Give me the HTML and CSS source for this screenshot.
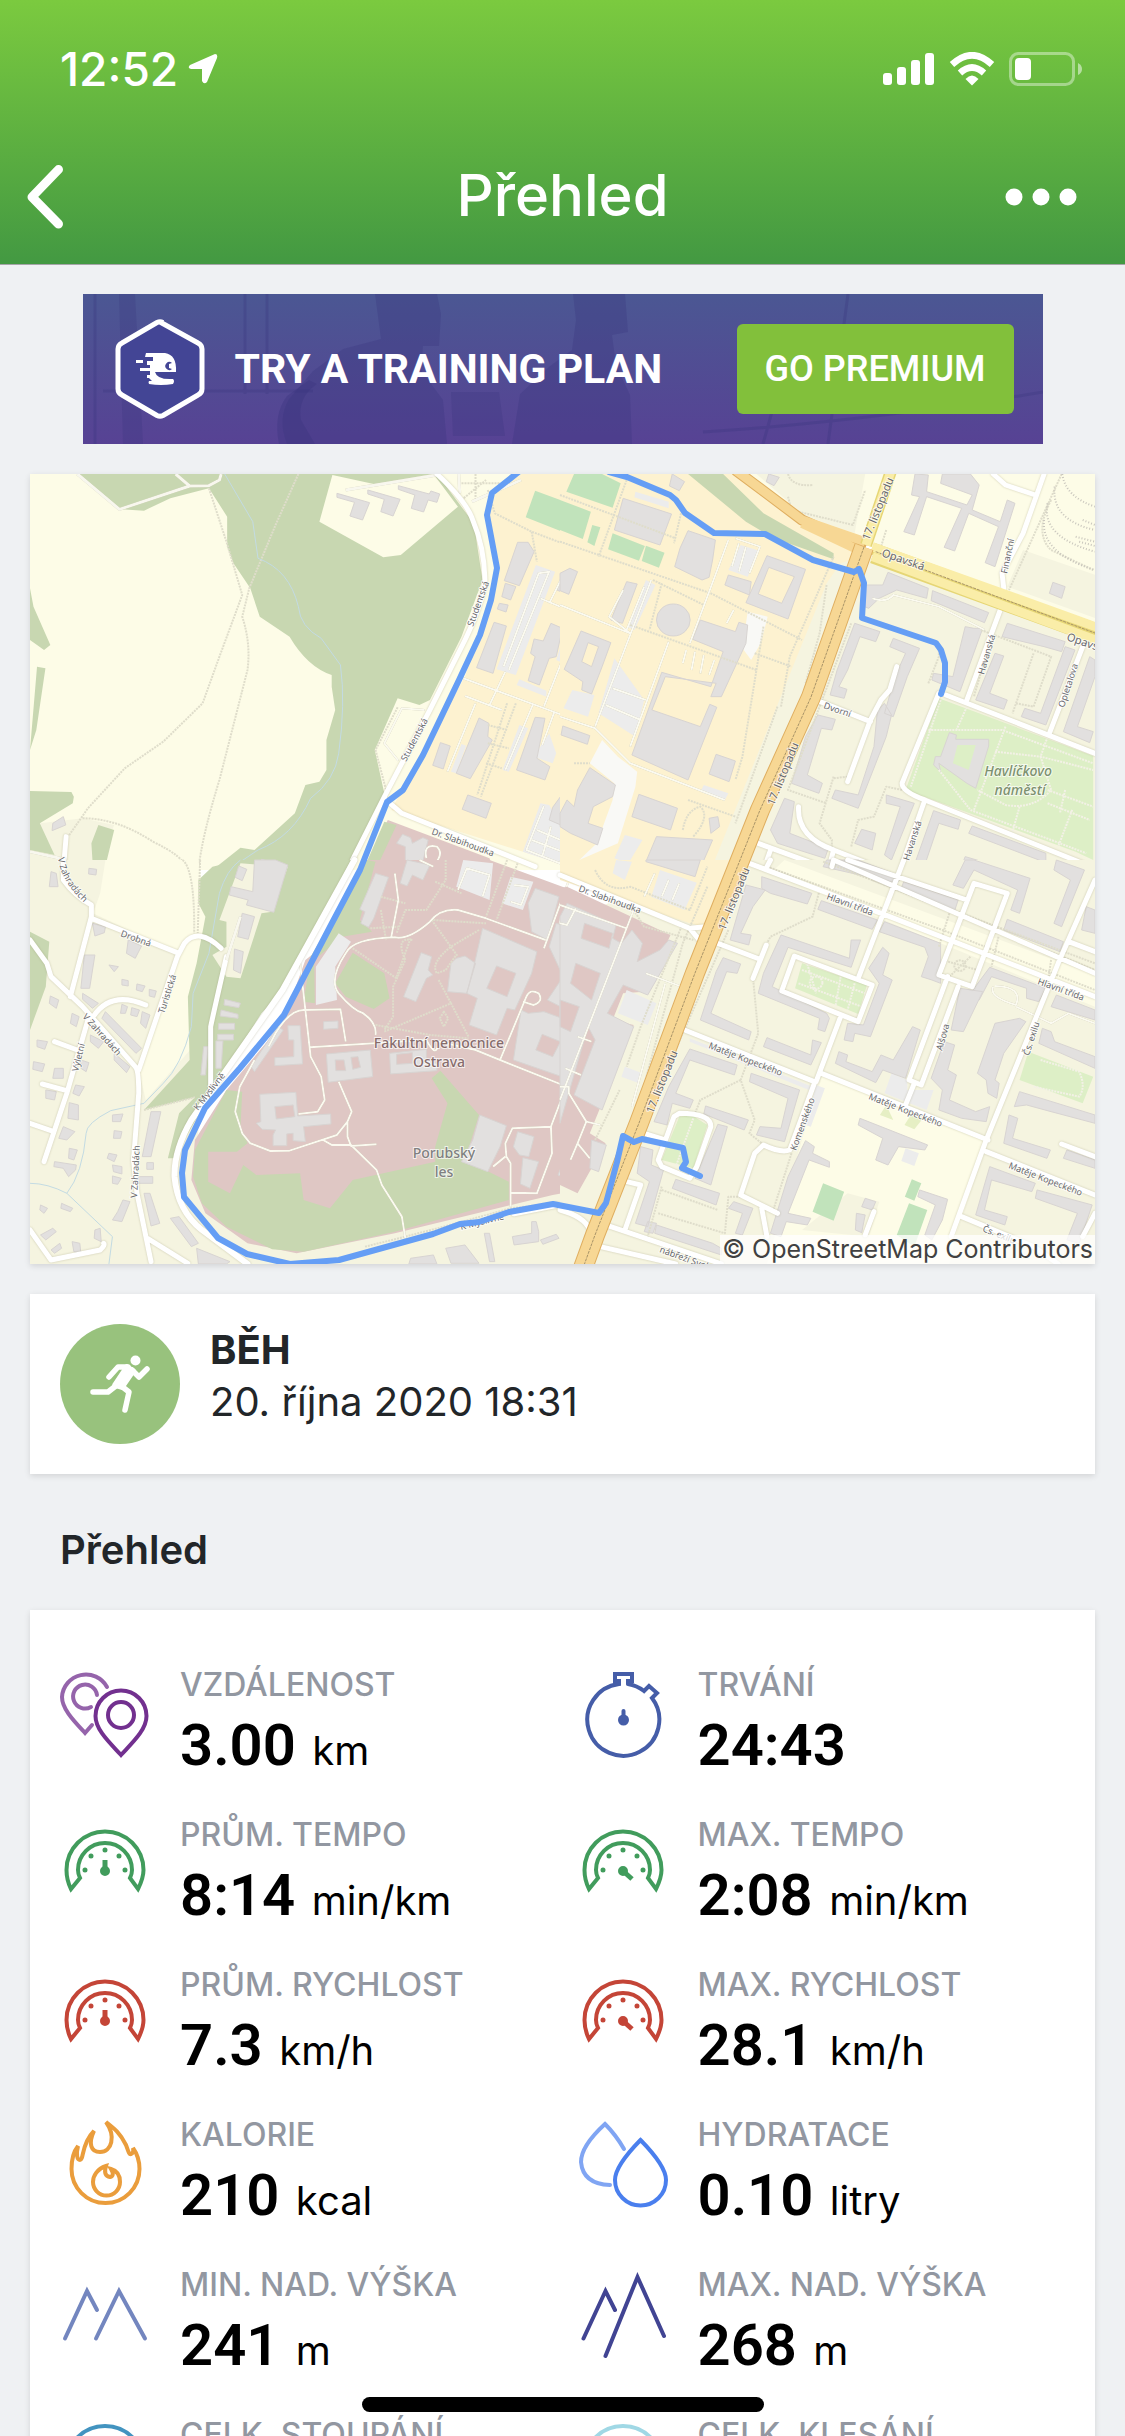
FILE: index.html
```html
<!DOCTYPE html>
<html lang="cs">
<head>
	<meta charset="UTF-8">
	<meta name="viewport" content="width=device-width, initial-scale=1.0">
	<title>Přehled</title>
	<link rel="stylesheet" href="styles.css">
</head>
<body>
	<div class="screen">
		<header class="header">
			<div class="status-bar">
				<div class="status-left">
					<span class="time">12:52</span>
					<svg class="location" viewBox="0 0 30 30"><path d="M27 0 L2 11 Q-1 14 3 15 L14 15 L14 27 Q16 31 19 28 L29 4 Q30 0 27 0z" fill="#fff"/></svg>
				</div>
				<div class="status-right">
					<svg width="52" height="34" viewBox="0 0 52 34" fill="#fff">
						<rect x="0" y="21" width="9" height="12" rx="3"/>
						<rect x="14" y="15" width="9" height="18" rx="3"/>
						<rect x="28" y="8" width="9" height="25" rx="3"/>
						<rect x="42" y="1" width="9" height="32" rx="3"/>
					</svg>
					<svg width="46" height="34" viewBox="0 0 46 34" fill="none" stroke="#fff" stroke-width="6.5">
						<path d="M3 12.5 Q23 -6 43 12.5"/>
						<path d="M11 21 Q23 10 35 21"/>
						<path d="M16.500 27 Q23 20 29.500 27 L23 33.500z" fill="#fff" stroke="none"/>
					</svg>
					<svg width="74" height="34" viewBox="0 0 74 34">
						<rect x="1.500" y="1.500" width="63" height="31" rx="8" fill="none" stroke="#fff" stroke-width="3" opacity=".4"/>
						<rect x="6" y="6" width="16" height="22" rx="4" fill="#fff"/>
						<path d="M69 11 q4 2 4 6 t-4 6z" fill="#fff" opacity=".5"/>
					</svg>
				</div>
			</div>
			<div class="nav">
				<button class="nav-btn" aria-label="Zpět">
					<svg width="36" height="64" viewBox="0 0 36 64"><path d="M31.500 4.500 L5 32 L31.500 59" fill="none" stroke="#fff" stroke-width="9" stroke-linecap="round" stroke-linejoin="round"/></svg>
				</button>
				<h1>Přehled</h1>
				<button class="nav-btn nav-more" aria-label="Více">
					<svg width="72" height="18" viewBox="0 0 72 18" fill="#fff"><circle cx="9" cy="9" r="8.500"/><circle cx="36" cy="9" r="8.500"/><circle cx="63" cy="9" r="8.500"/></svg>
				</button>
			</div>
		</header>

		<main>
			<section class="banner">
				<svg class="banner-bg" viewBox="0 0 960 150" preserveAspectRatio="none" fill="#38357d">
					<path d="M292 0 h62 l4 20 -2 32 h-16 l-2 24 22 30 4 44 h-160 q-10 -25 2 -45 l24 -28 30 -22 38 -10z" opacity=".3"/>
					<path d="M196 150 q-6 -30 8 -48 l22 -16 8 4 q-20 14 -16 36 l14 24z" opacity=".35"/>
					<path d="M490 0 h52 l3 38 -16 3 4 30 14 30 2 49 h-120 l8 -50 30 -28 22 -16 4 -30z" opacity=".3"/>
					<path d="M368 98 h48 l6 44 h-52z M36 0 h16 l8 150 h-20z" opacity=".25"/>
					<path d="M12 0 v150 M162 0 v100 M184 0 v100 M20 97 h210 M765 0 L745 150 M705 60 L680 150 M620 138 Q780 128 960 98" fill="none" stroke="#38357d" stroke-width="3" opacity=".3"/>
				</svg>
				<svg class="banner-logo" viewBox="0 0 90 100">
					<path d="M45 3 L83 24 Q87 26 87 30 V70 Q87 74 83 76 L48 96.500 Q45 98 42 96.500 L7 76 Q3 74 3 70 V30 Q3 26 7 24 L42 3.500 Q45 2 48 3.500" fill="#434595" stroke="#fff" stroke-width="5"/>
					<path d="M31 34 H50 Q62 36 61 53 H40 Q42 61 58 60 Q60 62 58 65 Q46 67 34 65 Q33 63 34 62 H37 L34 59 H32 V56 H35 V52 H25 V49 H35 V46 H32 V42 H38 V38 H30z M21 41 h7 v3 h-7z" fill="#fff"/>
					<path d="M57 44 a4 4 0 1 0 0 6 l-3 -1 v-4z" fill="#434595"/>
				</svg>
				<span class="banner-text">TRY A TRAINING PLAN</span>
				<button class="premium-btn">GO PREMIUM</button>
			</section>

			<section class="card map">
				<svg class="map-svg" viewBox="30 474 1065 790" preserveAspectRatio="xMidYMid slice">
					<!-- north-west -->
					<g transform="translate(30 470) scale(.3508 .3333)">
						<path class="field" d="M0 0 H1568 V1200 H0z"/>
						<path class="wood" d="M140 12 L260 118 L325 122 L400 85 L510 55 L562 140 L562 230 L580 280 L628 355 L655 440 L740 500 Q790 590 860 615 L860 650 L870 720 L845 810 L845 900 L825 935 L785 945 L755 1030 L640 1140 L600 1133 L520 1200 L915 1200 L1010 970 L983 840 L1048 685 L1110 705 L1140 690 L1230 500 L1290 330 L1265 160 L1160 12z"/>
						<path class="field" d="M862 15 L825 155 L1007 262 L1057 255 L1220 110 L1150 12 L980 42z"/>
						<path class="town" d="M0 1140 L28 1060 L150 1045 L240 1065 L212 1140 L200 1200 L0 1200z"/>
						<path class="wood" d="M0 355 L10 410 L58 525 L40 540 L0 510z M20 590 L44 595 L18 780 L0 840z M0 963 L118 966 L125 980 L122 1000 L28 1060 L70 1155 L0 1140z M195 1065 L240 1080 L218 1175 L178 1170 L175 1120z"/>
						<path class="campus" d="M1400 12 H1568 V1200 L1030 1020 L1060 960 L1240 620 L1330 300 L1300 130 L1318 70z"/>
						<path class="hospital" d="M1020 1050 L1310 1165 L1320 1200 H950z"/>
						<path class="wood" d="M1010 1055 L1045 1065 L985 1200 H950z"/>
						<path class="pitch" d="M1440 62 L1568 112 V206 L1413 142z M1540 12 H1568 V78 L1530 62z"/>
						<path class="lot" d="M1442 285 L1497 305 L1385 615 L1330 598z M1535 452 L1560 462 L1520 580 L1500 570z M1395 628 L1472 662 V680 L1387 645z M1230 822 L1243 827 L1215 910 L1200 905z M1395 765 L1420 775 L1365 905 L1347 900z M1480 790 L1500 850 L1490 880 L1435 860z M1455 1000 L1480 1005 L1535 1110 L1520 1185 L1405 1145z"/>
						<path class="bld" d="M875 70 L925 85 L968 98 L948 150 L912 138 L925 97 L875 82z M963 60 L1055 88 L1035 138 L1000 125 L1010 88 L963 72z M1050 47 L1138 72 L1143 63 L1168 72 L1160 97 L1135 90 L1122 126 L1087 115 L1097 75 L1050 58z"/>
						<path class="bld" d="M1390 217 L1420 217 L1437 245 L1395 347 L1352 332z M1355 340 L1385 350 L1370 390 L1345 380z M1338 400 L1363 405 L1357 426 L1332 417z M1323 457 L1358 468 L1320 610 L1273 593z M1485 460 L1518 475 L1500 560 L1480 565 L1452 645 L1420 632 L1440 560 L1427 550 L1437 507 L1463 513z M1537 295 L1562 305 L1535 375 L1502 360 L1510 335 L1525 335z M1540 500 L1568 485 V640 L1523 600z M1280 744 L1308 760 L1305 800 L1318 810 L1255 926 L1215 910z M1170 818 L1198 828 L1178 897 L1148 886z M1440 742 L1468 745 L1445 865 L1482 890 L1468 930 L1387 900z M1248 975 L1315 1000 L1300 1045 L1232 1018z M1515 765 L1568 785 V818 L1512 795z M1490 1012 L1540 940 L1568 950 V1090 L1480 1050z M1062 1093 L1085 1103 L1090 1120 L1120 1103 L1135 1110 L1115 1195 H1070 V1130 L1045 1120z M65 1060 L95 1040 L102 1065 L63 1082z M660 1168 L735 1190 V1200 H650z"/>
						<path class="path" d="M510 55 L560 215 L605 375 L540 560 L492 700 L380 815 L270 895 L165 1015 L110 1098 M765 12 L700 165 L625 355 L605 440 Q630 520 620 600 L540 930 Q490 1100 480 1200 M150 1045 Q250 1045 350 1115 Q440 1160 450 1200 M1305 60 L1325 130 L1430 185 L1568 240 M1430 185 L1445 275 M1360 700 L1275 975 M1385 700 L1285 980 M1305 765 L1360 780 M1305 820 L1365 835 M1300 880 L1345 895 M1270 12 V90 M1230 40 H1340 M1230 90 L1300 30 M1048 712 L985 840 L1015 960"/>
						<path class="service" d="M1235 625 L1568 755 M1270 700 L1190 905 M1240 678 L1345 720 M1355 605 L1310 705 M1350 590 L1450 310 L1480 305 L1365 600 M1455 385 L1568 435 L1465 710 M1435 700 L1355 900 M1495 725 L1460 825 M1520 315 L1480 400 M1050 872 L1010 820 L1060 715 L1125 720 M1465 1008 L1415 1140 L1510 1180 L1535 1120 L1445 1080 M1430 1110 L1530 1150 M1485 1070 L1460 1160 M1130 1165 Q1120 1120 1160 1130 Q1180 1150 1155 1180"/>
						<path class="stream" d="M555 12 L635 155 L650 265 Q740 300 765 410 Q770 470 830 505 L885 585 Q900 700 880 850 Q870 930 800 985 Q750 1100 650 1140 L565 1200"/>
						<path class="minor" d="M135 12 L255 118 L455 48 L510 47 L540 30 L545 12 M455 48 L415 12 M900 60 L1160 15 M1260 95 L1400 30 M1222 12 L1225 70 M0 1145 L85 1165"/>
						<path class="street" d="M1160 12 Q1245 95 1262 150 Q1295 230 1297 330 Q1290 400 1240 510 L1140 720 L1015 970 L905 1200 M1015 990 L1060 1030 L1440 1190 M103 1100 L95 1200"/>
					</g>

					<!-- north-east -->
					<g transform="translate(560 470) scale(.3508 .3333)">
						<path class="campus" d="M0 0 H860 L840 290 L500 1200 H0z"/>
						<path class="field" d="M510 12 H1568 V470 L860 220z"/>
						<path class="town" d="M800 280 L890 250 L1568 500 V1200 H430 L760 340z M560 12 H870 L840 190 L700 140z M1320 240 L1568 330 V460 L1275 350z"/>
						<path class="wood" d="M365 12 H465 L580 130 L780 250 V268 L610 205 L530 155z"/>
						<path class="park" d="M1080 685 L1520 858 V1170 L1470 1145 L985 960z"/>
						<path class="pitch" d="M40 12 H120 L173 40 L150 113 L18 65z M0 90 L88 125 L65 207 L0 180z M92 165 L115 172 L98 228 L78 217z M150 190 L242 228 L225 272 L137 238z M245 227 L298 248 L282 293 L233 273z"/>
						<path class="white" d="M535 425 L592 440 L572 520 L545 570 L520 535z M120 810 L165 860 L220 905 L215 950 L165 1120 L55 1170 L105 1120 L150 990 L155 940 L85 880z"/>
						<path class="lot" d="M515 225 L568 242 L535 320 L480 300z M245 330 L272 345 L212 480 L192 470z M215 65 L310 95 V115 L212 82z M35 660 L98 675 L80 740 L10 715z M155 565 L240 690 L215 800 L110 730z M185 1095 L235 1110 L195 1180 L155 1165z M410 945 L480 970 L470 990 L400 965z"/>
						<path class="bld" d="M180 85 L318 132 L285 225 L155 180z M320 12 L355 35 L340 62 L312 48z M365 182 L443 210 L435 270 L425 322 L405 330 L327 290 L342 235z M480 315 L545 335 L540 375 L470 345z"/>
						<path class="bld" fill-rule="evenodd" d="M590 257 L700 298 L650 447 L530 398z M595 292 L668 320 L632 400 L565 372z M60 483 L145 518 L120 590 L90 672 L62 660 L65 635 L12 598z M80 518 L110 530 L90 590 L62 575z"/>
						<circle class="bld" cx="323" cy="450" r="48"/>
						<path class="bld" d="M190 335 L220 342 L178 460 L145 450z M400 450 L500 485 L510 457 L535 465 L530 520 L460 680 L430 680 L445 640 L300 620 L262 720 L400 770 L427 703 L447 712 L365 930 L205 855 L290 607 L430 650 L465 545 L378 508z M445 853 L500 873 L482 935 L425 912z M225 973 L335 1015 L315 1080 L205 1040z M85 893 L158 945 L150 980 L95 1010 L80 1060 L122 1075 L107 1125 L30 1090 L0 1070 V1030 L20 990 L40 1010 L50 960z M275 1100 L435 1110 L400 1195 L245 1175z M425 1045 L450 1040 L455 1070 L430 1090z M595 12 L625 22 L610 47 L588 35z M8 768 L85 797 L78 823 L3 795z M28 295 L50 305 L25 373 L0 362 V310z"/>
						<path class="bld" d="M1012 12 L1050 15 L1045 65 L1160 105 L1175 75 L1085 40 L1090 12 H1170 L1195 45 L1175 120 L1255 155 L1275 90 L1297 100 L1240 290 L1212 278 L1250 170 L1165 130 L1125 243 L1095 232 L1145 115 L1045 80 L1010 195 L980 185 L1025 80 L1002 75z M1405 337 L1440 350 L1430 385 L1395 370z M935 307 L1050 355 L1045 385 L960 360 L910 385 L880 415 L868 410 L870 345 L920 345z M1062 362 L1222 428 L1210 458 L1058 392z M1155 470 L1180 475 L1205 475 L1140 665 L1060 630 L1065 610 L1120 620z M840 460 L912 485 L900 515 L855 500 L820 600 L795 650 L818 658 L810 685 L770 675 L790 600z M950 505 L1025 535 L990 620 L950 740 L925 730 L955 620 L985 550 L940 530z M925 700 L945 735 L930 800 L850 1015 L775 985 L785 960 L850 975 L895 830 L905 720z M735 735 L785 748 L775 780 L745 775 L705 915 L748 940 L738 970 L660 940 L700 800z"/>
						<path class="bld" d="M1275 460 L1440 515 L1430 545 L1380 530 L1260 500z M1440 530 L1468 540 L1385 765 L1315 740 L1325 715 L1370 730z M1240 550 L1265 558 L1225 670 L1275 690 L1265 718 L1185 690z M1510 560 L1525 570 V620 L1475 770 L1520 785 L1510 818 L1435 785z M1110 788 L1130 795 L1128 808 H1222 V828 L1185 955 L1160 940 L1080 880 L1085 905 L1065 885 L1070 860 H1085z M640 985 L668 995 L655 1090 L765 1135 L755 1165 L620 1120 L600 1080z M930 975 L1010 1000 L945 1170 L925 1155 L970 1010 L930 1000z M1065 1022 L1142 1050 L1135 1078 L1080 1060 L1035 1200 H1005z M1175 1068 L1385 1150 V1178 L1165 1090z M860 1078 L900 1090 L890 1140 L840 1120z M1155 1160 L1220 1180 V1200 H1140z"/>
						<path class="parkhole" d="M1133 825 H1185 L1165 900 L1120 880z"/>
						<path class="path" d="M0 75 L330 205 M0 215 L430 370 L690 510 M190 30 L110 260 M345 130 L325 220 M265 330 L410 405 M290 340 L255 480 M200 465 L560 600 M580 470 L520 860 L500 930 M555 550 L660 590 M630 710 L655 560 L780 260 M620 710 L500 1060 M650 80 L660 120 L835 165 L870 60 M650 12 Q660 50 720 45 M930 180 L900 280 M1430 12 L1280 360 M1400 90 Q1350 190 1400 240 L1520 300 M760 345 L740 490 L700 640 M830 460 L650 960 L760 1000 M780 920 L740 1060 L775 1110 V1140 M820 920 L780 925 M975 960 L930 950 L895 1040 L850 1050 L830 1130 M1050 640 L1080 560 V530 M1200 480 L1400 560 L1350 710 L1300 700 M1350 550 L1290 730 M1230 500 L1180 680 M40 880 H85 M350 1080 Q360 1020 400 1010 Q430 1040 380 1100 M365 990 L500 1040"/>
						<path class="parkpath" d="M1050 780 H1260 L1520 880 M1085 690 L1000 950 M1160 710 L1130 780 M1080 900 L1170 1020 L1400 1110 L1500 1150 M1270 770 L1180 1020 M1240 845 L1370 860 L1520 900 M1390 800 L1370 860 L1400 960 Q1350 1020 1270 1005 L1190 960 M1440 960 L1425 1030 M1310 1010 L1290 1085 M1460 1020 L1420 1130 M1390 960 L1520 1010 M1390 1000 L1510 1050"/>
						<path class="service" d="M480 210 L420 380 L370 520 M500 205 L570 230 L540 310 M510 220 L490 290 M530 230 L510 305 M495 420 L475 460 M260 330 L100 770 M240 350 L190 480 M0 740 L100 775 L200 880 L470 990 M310 515 L200 830 M130 705 L230 750 M150 655 L245 690 M180 360 L140 440 L200 490 M0 405 L200 490 M360 540 L350 580 M385 545 L375 600 M410 555 L400 610 M440 570 L425 615 M890 385 Q930 400 950 375 L1080 410 L1210 480"/>
						<path class="rail" d="M1432 12 Q1440 80 1525 110 M1410 50 Q1400 150 1525 180 M1390 100 Q1370 200 1525 245 M1380 150 Q1370 250 1525 300 M1470 200 L1525 215 M1480 215 L1525 228 M1490 150 L1525 165"/>
						<path class="street" d="M730 690 L885 755 M960 590 L940 660 L915 690 L885 750 L820 935 M1080 670 L975 940 Q975 965 1040 990 L1525 1195 M1040 990 L970 1200 M1100 675 L1525 850 M1255 420 L1160 690 M1490 530 L1395 790 M1265 355 L1260 310 L1320 190 L1380 12 M1355 75 L1270 45 L1235 12 M680 1010 Q675 1100 780 1140 L900 1190 M780 1140 L765 1200 M565 1120 L760 1195 M600 1140 L580 1200"/>
						<path class="secondary-edge" d="M890 235 L1540 485 M890 262 L1540 510"/>
						<path class="secondary" d="M890 230 L1540 475 M890 260 L1540 515"/>
						<path class="lane" d="M900 245 L1540 495"/>
						<path class="trunk-edge thin" d="M500 0 L690 150 L870 235"/>
						<path class="trunk thin" d="M500 0 L690 150 L870 215 M690 160 L850 240"/>
					</g>

					<!-- south-west -->
					<g transform="translate(30 860) scale(.3508 .3333)">
						<path class="town" d="M0 0 H480 V1215 H0z M400 900 H1568 V1215 H300z"/>
						<path class="field" d="M215 0 H480 L520 280 L465 560 L330 720 L310 630 L420 280 L180 160 L200 100z"/>
						<path class="wood" d="M600 0 H915 L740 370 L660 460 L520 690 L410 895 H393 L425 760 L470 712 L325 750 L455 600 L450 410 L475 310 L500 170 L480 130 V60 L520 20z M0 215 L55 245 L45 380 L0 510z"/>
						<path class="town" d="M600 10 L735 20 L690 155 L660 160 L600 355 L560 350 L520 285 L560 260 L560 185 L540 180z"/>
						<path class="hospital" d="M960 0 H1310 L1568 100 V990 L1490 1005 L1040 1120 L760 1180 L620 1150 L500 1060 L460 960 L470 840 L560 690 L720 490 L785 300 L880 220z"/>
						<path class="wood" d="M960 0 L985 5 L940 180 L975 215 L890 230 L810 300 L812 430 L780 425 L800 290z M920 278 L1010 340 L1025 415 L980 447 L900 410 L870 370z M560 690 L605 695 L600 800 L620 850 L590 875 H508 V965 L570 1000 L608 915 L645 945 L770 940 L780 1020 L855 1045 L920 960 L1155 905 V860 L1190 730 L1145 655 L1170 632 L1280 765 L1240 900 L1365 965 V1020 L1040 1115 L780 1175 L690 1168 L560 1100 L490 1030 L465 950 L470 870z"/>
						<path class="lot" d="M880 220 L915 245 L870 320 L875 420 L815 435 V320z M1235 0 L1320 10 L1310 120 L1215 80z M1370 50 L1435 65 L1405 150 L1345 130z"/>
						<path class="bld" d="M640 0 H700 L735 15 L695 157 L617 135 L622 120 L568 105 L573 80 L635 95z M595 18 L618 28 L605 62 L585 52z M605 160 L640 170 L622 238 L592 230z M583 267 L608 275 L600 340 L580 330z M555 418 L600 430 L595 443 L553 435z M545 450 L593 463 V475 L542 468z M538 490 H583 V508 H537z M535 523 H580 V540 H535z M530 543 H550 L545 625 H530z M495 560 H508 L500 645 H487z M155 285 H185 L170 385 H145z M215 455 L318 565 L302 580 L205 475z M345 755 H373 L345 890 H320z M325 1000 H342 L370 1090 L345 1098z M400 1075 L425 1070 L480 1150 L460 1160z M475 1165 L570 1205 L560 1212 H480z M250 1055 L265 1020 L285 1025 L262 1085 L235 1080z M20 540 L50 545 L42 568 L20 560z M10 605 L42 612 L35 635 L8 628z M70 625 H95 V655 H65z M45 690 L75 695 L70 720 L45 715z M130 675 L155 680 L140 708 L122 700z M112 728 L138 735 V780 L108 775z M95 800 L128 815 L105 840 L82 835z M235 765 L265 762 L258 785 H235z M240 812 L262 815 L258 835 H238z M225 880 L248 885 L240 905 L220 895z M235 915 L262 920 V942 L238 935z M235 948 L260 955 L250 973 L235 970z M70 905 L132 915 L130 930 L110 950 L95 925 L68 920z M112 865 L135 870 L125 900 L110 895z M30 1035 L50 1045 L40 1060 L28 1050z M90 1030 L122 1045 L115 1055 L88 1045z M120 1145 L142 1150 L145 1180 L125 1175z M185 1110 L200 1105 L203 1145 L183 1135z M60 1170 L85 1150 L90 1165 L70 1180z M30 1125 L65 1105 L75 1115 L45 1140z M60 35 L75 40 L80 80 L55 80z M168 25 L190 28 L188 45 L167 42z M178 190 L215 200 L212 218 L185 228z M280 240 L318 258 L300 295 L275 280z M225 315 L252 320 L240 335z M262 358 L280 362 V378 L262 375z M305 372 L328 378 L320 395 L303 390z M340 388 L360 393 L355 412 L340 408z M58 408 L82 420 L75 445 L55 430z M120 460 L140 470 L132 500 L115 490z M150 400 L195 430 L178 445 L150 418z M262 433 L278 440 L272 460 H258z M290 443 L312 450 L305 470 L287 465z M320 455 L342 465 L330 505 L315 490z M172 525 L210 545 L195 565 L172 545z M240 580 L285 620 L275 638 L240 600z M145 600 L168 608 L160 635 L145 625z M305 950 H350 V970 H305z M333 908 H352 V928 H333z"/>
						<path class="bld" fill-rule="evenodd" d="M985 40 L1022 52 L980 175 L965 202 L943 190 L955 155 L940 148z M1075 0 L1140 15 L1120 60 L1090 45 L1075 78 L1055 70z M1115 278 L1145 290 L1135 330 L1148 345 L1130 355 L1100 425 L1065 410z M1215 295 L1240 288 L1270 310 L1245 400 L1190 395 L1200 310z M1290 205 L1445 275 L1430 340 L1382 450 L1360 445 L1330 525 L1252 495 L1275 415 L1245 400 L1265 320z M1330 318 L1385 340 L1360 410 L1302 385z M1400 450 L1420 460 L1465 455 L1555 490 L1510 648 L1378 600z M1460 523 L1512 545 L1490 590 L1442 570z M1440 85 L1508 110 L1475 240 L1430 215 L1420 130z M1500 190 L1568 210 V470 L1475 420 L1520 350 L1480 260z M735 497 H770 L777 612 L698 617 V593 L752 590 V540 H737z M837 485 L878 483 V505 L837 508z M845 582 L970 570 L977 650 L850 667z M870 600 H895 L900 632 H872z M915 592 L935 590 L942 622 L920 628z M1025 580 L1130 568 V600 L1160 610 V632 L1028 642z M1045 583 L1090 578 V610 L1045 613z M655 703 L758 697 L763 768 L857 762 L858 792 L780 800 L785 845 L750 842 V820 L732 822 V857 H693 V825 L700 810 L662 808 L645 790 L658 785z M698 740 L750 735 L755 770 L702 777z M1282 765 L1358 797 L1340 860 L1305 935 L1230 905 L1262 840z M1390 815 L1437 830 L1422 890 L1395 885 L1378 860z M1405 893 L1450 905 L1425 985 L1398 972z M1515 920 L1568 940 V975 L1505 945z M705 500 L722 510 L640 635 L630 620z M1430 1085 L1443 1085 L1450 1115 V1145 L1380 1155 L1375 1130 L1430 1120z M1455 1140 L1500 1123 L1508 1135 L1462 1153z M1295 1120 H1310 L1325 1205 H1310z M1185 1165 L1240 1155 L1280 1210 H1200z M1085 1195 L1150 1185 L1160 1212 H1080z"/>
						<path class="stream" d="M600 0 Q560 30 540 100 L510 280 L465 400 L460 500 Q430 620 380 670 L325 730 L230 752 Q160 790 160 820 Q150 940 105 1000 Q50 970 0 970 M105 1000 L235 1130 L225 1212"/>
						<path class="path" d="M435 0 Q470 30 468 220 M485 0 L478 220 M325 750 L470 712 M1155 65 L1230 100 M1185 0 V60 L1130 150 L1070 150 L1045 220 M1000 110 L1070 130 M1000 150 L1015 240 M970 205 L1050 200 M1360 0 L1300 170 M1390 10 L1330 180 M1150 180 L1300 190 M1090 240 Q1040 230 1070 300 L1035 380 V470 L1010 510 M1085 235 L1045 350 M920 265 L1045 355 M985 495 L1140 525 L1250 535 M1010 515 L1200 430 L1250 530 M1145 180 L1220 290 M1280 210 L1200 260 Q1140 310 1160 340 L1185 330 L1215 285 M1165 360 L1200 430 M1180 455 l-12 20 12 25 12 -25z M955 1160 Q1150 1110 1370 1045 L1500 1030"/>
						<path class="service" d="M1040 40 L1050 120 L1030 230 M1110 0 L1150 20 M770 310 L800 590 L830 650 L840 720 L820 755 L765 762 M680 560 L700 520 Q740 450 780 450 L885 448 L900 545 M798 562 L1130 540 Q1160 600 1165 545 L1270 570 L1340 600 L1530 680 M640 600 L598 680 L585 755 L605 820 L628 850 L685 873 L740 872 L875 825 L905 785 L917 755 L880 665 M905 785 V830 L915 858 L988 853 M835 840 L860 855 H915 L988 930 L1003 975 L1060 1070 L1070 1135 M1340 600 L1415 410 Q1425 385 1450 400 Q1465 425 1435 435 L1405 425 M1465 265 L1540 50 M1470 240 L1300 175 L1220 150 Q1170 145 1140 185 Q1080 240 1040 232 Q920 235 900 280 Q850 360 880 400 Q920 450 950 460 Q990 490 985 525 M1568 570 L1485 800 L1375 805 L1355 850 L1358 890 L1370 910 V1040 M1485 800 L1488 880 L1445 1000 L1370 998 M1355 890 L1320 920 M1530 680 L1540 720 L1568 760 M1220 90 L1245 25 L1310 45 L1290 110 M1380 75 L1420 80 L1400 135 L1370 125 M1530 135 L1560 145 M1520 140 L1510 190 L1540 200"/>
						<path class="street" d="M95 0 V60 Q130 110 175 135 V170 L115 410 M175 175 L425 280 M545 265 Q480 200 440 250 L420 290 L310 630 M0 240 L48 310 L60 350 L150 440 L300 620 Q310 630 310 700 L295 900 L305 1000 L345 1205 M180 470 Q230 390 330 435 M165 480 L105 700 L40 905 M70 545 L135 570 M35 672 L105 692 M0 790 L60 812 M335 1135 L450 1210 M0 1110 L60 1200 L200 1170 Q215 1155 210 1150 M515 690 V500 Q525 450 560 290"/>
						<path class="minor" d="M600 170 L560 300"/>
						<path class="street wide" d="M925 0 L720 390 L660 480 L520 690 L460 780 Q410 870 412 950 Q420 1050 490 1110 L620 1212 M1568 1050 L1500 1035 L1380 1060"/>
					</g>

					<!-- south-east -->
					<g transform="translate(560 860) scale(.3508 .3333)">
						<path class="town" d="M0 200 L390 0 H1568 V1215 H0z"/>
						<path class="campus" d="M0 0 H490 L410 200 L370 190 L0 60z"/>
						<path class="hospital" d="M0 85 L20 80 L315 225 L240 395 L180 400 L150 480 L210 495 L85 820 L130 850 L50 1000 L0 975z"/>
						<path class="field" d="M750 640 L1220 840 L1130 1120 L1110 1212 H590 L700 800z"/>
						<path class="field" d="M640 0 L1525 345 V440 L600 40z"/>
						<path class="town" d="M820 1000 L910 1025 L880 1130 L690 1110z"/>
						<path class="park" d="M690 310 L875 375 L850 462 L670 385z M340 770 L375 765 L420 795 L380 925 L290 900z M1335 575 L1520 650 L1490 730 L1310 660z"/>
						<path class="young" d="M930 735 L950 780 L912 765z M1000 765 L1035 775 L1010 808 L982 795z"/>
						<path class="pitch" d="M750 970 L810 995 L780 1082 L720 1055z M1003 958 L1030 970 L1010 1022 L983 1010z M995 1030 L1047 1050 L1010 1160 L960 1125z"/>
						<path class="lot" d="M190 390 L275 430 L250 495 L165 460z M285 30 L390 68 L355 150 L260 110z M945 640 L990 660 V690 L1065 690 L1045 750 L925 700z M730 675 L755 685 L715 800 L700 795z M985 865 L1023 880 L1010 918 L973 903z M370 535 L720 680 L710 690 L370 545z M160 0 L205 5 L185 60 L150 40z M185 620 L235 640 L225 670 L175 650z"/>
						<path class="bld" fill-rule="evenodd" d="M245 0 H400 L385 50 L245 5z M20 130 L160 195 L150 235 L175 250 L205 210 L235 250 L220 305 L285 270 L310 240 L335 250 L250 405 L180 375 L135 460 L210 500 L120 750 L40 705 L100 540 L80 500 L0 790 V170z M70 190 L150 220 L140 265 L60 235z M45 310 L115 340 L90 420 L30 370z M0 420 L55 440 L30 515 L0 500z M90 840 L132 855 L110 935 L85 925z"/>
						<path class="bld" d="M575 50 L718 100 L705 132 L600 100 L575 85z M530 75 L585 90 L550 140 L515 220 L545 225 L538 255 L485 240 L515 130z M745 122 L905 180 L890 208 L735 148z M760 0 H850 L975 50 L960 70 L750 20z M980 65 L1135 120 L1125 152 L970 92z M925 185 L1085 250 V370 L1060 360 L1030 350 L1050 290 L1040 262 L910 215z M1180 0 L1340 55 L1310 160 L1285 150 L1305 90 L1180 30 L1150 85 L1120 75 L1155 0z M1415 0 L1495 30 L1430 200 L1408 190 L1455 60 L1408 30z M1275 178 L1435 245 L1425 275 L1265 210z M1500 140 L1525 150 V220 L1487 210z M1225 322 L1385 385 L1365 425 L1330 415 V385 L1230 350 L1195 420 L1170 400z M1415 405 L1525 450 V480 L1400 440z"/>
						<path class="bld" d="M630 225 L825 295 L830 240 L857 240 L830 322 L650 262 L605 380 L760 460 L768 475 L755 515 L735 508 L740 475 L565 400 L580 340z M465 293 L515 312 L505 340 L475 335 L430 460 L545 515 L538 540 L400 480 L445 335z M920 262 L938 280 L920 345 L947 360 L885 530 L840 520 L835 545 L810 540 L820 490 L865 495 L910 370 L880 325z M590 533 L715 585 L720 540 L745 548 L715 615 L580 560z M370 567 L505 615 L497 645 L370 600 L330 700 L380 720 L370 745 L320 730 L305 795 L268 785 L310 680z M545 640 L683 690 L640 845 L560 825 L570 800 L630 805 L650 715 L540 665z M415 738 L537 780 L525 810 L410 762z M450 793 L477 800 L430 975 L385 955z M795 575 L820 585 L815 605 L890 635 L915 585 L950 600 L1005 500 L1027 510 L985 655 L920 630 L900 668 L785 610z M1140 385 L1205 395 L1150 515 L1115 510z M1095 545 L1125 555 L1105 630 L1130 645 L1110 720 L1185 755 L1225 740 L1215 785 L1145 775 L1080 750 L1090 690 L1058 655z M1240 490 L1310 475 L1328 485 L1265 580 L1240 660 L1252 670 L1245 715 L1220 700 L1215 660 L1190 640z M1375 505 L1400 515 L1410 545 L1525 590 V625 L1365 550z M1310 695 L1525 765 V790 L1400 755 L1330 735 L1295 740z M1280 765 L1305 775 L1290 835 L1398 870 L1388 895 L1265 850z M1445 870 L1525 900 V925 L1435 895z M1225 920 L1355 970 L1345 995 L1230 960 L1210 1050 L1275 1070 L1268 1095 L1185 1065z M1360 990 L1517 1035 L1480 1150 L1445 1140 L1475 1060 L1355 1015z"/>
						<path class="bld" d="M855 775 L1048 855 L1040 870 L965 860 L935 915 L900 900 L920 835 L850 795z M700 842 L725 860 L720 880 L768 905 V922 L710 900 L650 1060 L715 1075 L705 1095 L645 1085 L630 1130 L600 1120 L650 950z M1025 990 L1105 1018 L1090 1080 L1060 1140 L1040 1125 L1070 1035 L1020 1010z M870 1015 L900 1025 L890 1050 L860 1040z M845 1060 L870 1065 L860 1118 L842 1110z M495 1025 L550 1045 L520 1125 L500 1120 L520 1060 L480 1045z M230 860 L265 870 L260 915 L295 930 L250 1100 L215 1090 L255 965 L220 940z M330 958 L455 1000 L445 1035 L320 985z M275 1095 L435 1150 L460 1165 V1185 L270 1120z M250 1085 l25 5 -10 30 -25 -5z"/>
						<path class="path" d="M350 190 L230 500 L190 620 M420 80 L350 250 L210 790 M480 210 L300 640 L210 900 M210 150 L240 200 L380 240 M740 90 L720 170 L600 230 L590 250 M550 350 L565 520 L515 660 L555 780 L540 820 L575 850 M515 660 L400 720 L385 760 M660 880 L605 1060 M590 20 L1090 210 L1525 390 M750 5 L1525 310 M890 60 L1525 330 M1110 160 L1080 260 M1250 230 L1230 320 M1400 300 L1390 370 M100 30 Q130 100 200 80 L370 150 L420 20 M100 840 L170 690 M290 980 L250 1130 M290 990 L450 1050 M280 1060 L470 1120 L480 1010 H520 M1090 300 L1190 330 M1110 350 L1170 290"/>
						<path class="parkpath" d="M690 330 L870 400 M680 370 L860 440 M705 312 L730 400 M800 350 L785 440 M840 370 L820 450 M1370 600 L1480 635 Q1500 680 1480 710 L1350 680 M380 775 L330 920"/>
						<circle class="parkpath" cx="730" cy="368" r="18"/>
						<circle class="path" cx="1140" cy="317" r="16"/>
						<path class="service" d="M245 340 L352 382 M210 150 L0 720 M0 135 L190 205 M45 145 L20 195 L0 190 M0 680 L25 680 V700 L75 785 L50 850 L30 900 M50 850 L85 895 M75 785 L115 795 M50 530 L90 545 M15 625 L60 645 M300 370 L205 740 M1235 380 Q1220 410 1300 435 Q1320 380 1240 378 M1300 440 L1400 490 L1450 460 L1525 490 M270 40 L240 110 M310 60 L290 110 M340 70 L320 120"/>
						<path class="street" d="M0 45 L370 205 L415 200 M370 205 L405 250 M540 10 L940 170 L1525 410 M590 20 L600 0 M775 20 L780 0 L1525 340 M820 0 L1160 120 M980 0 L850 355 M1180 70 L1275 100 L1175 380 L1080 345z M1105 350 L995 660 L1030 675 L1135 380 M1010 670 L985 735 M1525 60 L1420 310 L1215 840 L1115 1130 M1450 245 L1525 275 M450 250 L568 297 M588 255 L550 355 M668 288 L890 375 L850 485 L632 393z M355 510 L725 665 M800 470 L730 665 M725 670 L655 870 Q630 880 580 855 L555 880 L515 1005 L620 1060 M575 1045 L590 1130 M745 640 L1220 840 M1215 875 L1525 1005 M1430 852 L1525 890 M1145 1070 L1350 1160 L1420 1212 M1525 1060 L1490 1130 M240 820 L300 840 M340 760 Q430 760 430 800 L390 920 L370 955 L290 920 L280 900 L325 770z M190 965 L230 975 L185 1110 M115 1160 L330 1212 M130 1095 L460 1212 M895 1055 L870 1125 M0 1050 Q70 1070 85 1110 L120 1075"/>
					</g>

					<!-- through road -->
					<g>
						<path class="secondary-edge" d="M892 468 L866 545"/>
						<path class="secondary" d="M892 468 L866 545"/>
						<path class="trunk-edge" d="M864 547 L811 697 L760 810 L695 973 L639 1123 L595 1235 L583 1268"/>
						<path class="trunk" d="M864 547 L811 697 L760 810 L695 973 L639 1123 L595 1235 L583 1268"/>
						<path class="lane" d="M864 547 L811 697 L760 810 L695 973 L639 1123 L595 1235 L583 1268"/>
						<path id="zahrady" d="M58 858 Q62 888 98 914" fill="none"/>
					</g>

					<g class="labels">
						<text transform="translate(473 627) rotate(-70)">Studentská</text>
						<text transform="translate(406 762) rotate(-62)">Studentská</text>
						<text transform="translate(431 834) rotate(20)">Dr. Slabihoudka</text>
						<text transform="translate(578 891) rotate(20)">Dr. Slabihoudka</text>
						<text class="big" transform="translate(869 541) rotate(-68)">17. listopadu</text>
						<text class="big" transform="translate(774 806) rotate(-68)">17. listopadu</text>
						<text class="big" transform="translate(725 931) rotate(-68)">17. listopadu</text>
						<text class="big" transform="translate(653 1114) rotate(-68)">17. listopadu</text>
						<text class="big" transform="translate(881 556) rotate(19)">Opavská</text>
						<text class="big" transform="translate(1066 640) rotate(19)">Opavská</text>
						<text transform="translate(823 708) rotate(19)">Dvorní</text>
						<text transform="translate(984 675) rotate(-74)">Havanská</text>
						<text transform="translate(909 861) rotate(-72)">Havanská</text>
						<text transform="translate(1007 574) rotate(-78)">Finanční</text>
						<text transform="translate(1064 708) rotate(-72)">Opletalova</text>
						<text transform="translate(826 899) rotate(20)">Hlavní třída</text>
						<text transform="translate(1037 984) rotate(20)">Hlavní třída</text>
						<text transform="translate(708 1048) rotate(21)">Matěje Kopeckého</text>
						<text transform="translate(868 1099) rotate(21)">Matěje Kopeckého</text>
						<text transform="translate(1008 1168) rotate(21)">Matěje Kopeckého</text>
						<text transform="translate(796 1151) rotate(-70)">Komenského</text>
						<text transform="translate(942 1051) rotate(-74)">Alšova</text>
						<text transform="translate(1029 1056) rotate(-72)">Čs. exilu</text>
						<text transform="translate(982 1231) rotate(22)">Čs. exilu</text>
						<text transform="translate(659 1252) rotate(20)">nábřeží Svobody</text>
						<text><textPath href="#zahrady">V Zahradách</textPath></text>
						<text transform="translate(120 936) rotate(20)">Drobná</text>
						<text transform="translate(164 1014) rotate(-72)">Turistická</text>
						<text transform="translate(78 1072) rotate(-76)">Výletní</text>
						<text transform="translate(82 1017) rotate(48)">V Zahradách</text>
						<text transform="translate(137 1198) rotate(-87)">V Zahradách</text>
						<text transform="translate(198 1111) rotate(-52)">K Myslivně</text>
						<text transform="translate(461 1230) rotate(-14)">K Myslivně</text>
						<g class="place">
							<text class="square" x="1018" y="776">Havlíčkovo</text>
							<text class="square" x="1020" y="795">náměstí</text>
							<text class="clinic" x="439" y="1048">Fakultní nemocnice</text>
							<text class="clinic" x="439" y="1067">Ostrava</text>
							<text x="444" y="1158">Porubský</text>
							<text x="444" y="1177">les</text>
						</g>
					</g>

					<!-- recorded track -->
					<path class="track" d="M521 470 L492 493 L487 515 L497 568 L491 600 L480 635 L459 680 L423 755 L403 790 L387 802 L360 870 L332 923 L284 1015 L240 1068 L205 1108 L185 1150 L182 1173 L184 1197 L218 1238 L247 1254 L290 1264 L339 1260 L433 1234 L460 1224 L479 1222 L509 1212 L553 1204 L599 1213 L606 1203 L613 1177 L617 1162 L623 1136 L634 1142 L642 1139 L683 1148 L686 1162 L682 1168 L700 1176"/>
					<path class="track" d="M609 472 L627 477 L670 495 L676 500 L685 513 L714 533 L765 534 L813 560 L854 572 L859 569 L864 583 L862 618 L936 643 L941 650 L945 663 V682 L941 694"/>
				</svg>
				<span class="attribution">© OpenStreetMap Contributors</span>
			</section>

			<section class="card activity">
				<svg class="activity-icon" viewBox="0 0 120 120">
					<circle cx="60" cy="60" r="60" fill="#98c27d"/>
					<g fill="none" stroke="#fff" stroke-width="5.500" stroke-linecap="round" stroke-linejoin="round">
						<circle cx="75.500" cy="36.500" r="5" fill="#fff" stroke="none"/>
						<path d="M68 43 H58 L49 53"/>
						<path d="M72 46 L79 53 L87 45"/>
						<path d="M57 61 L48 68 H33"/>
						<path d="M60 61 L69 68 L65 86"/>
						<path d="M67 43 L73 47 L62 63 L55 61z" fill="#fff"/>
					</g>
				</svg>
				<div class="activity-text">
					<strong>BĚH</strong>
					<span>20. října 2020 18:31</span>
				</div>
			</section>

			<h2>Přehled</h2>

			<section class="card stats">
				<div class="stat">
					<svg class="stat-icon" viewBox="0 0 90 90" stroke="#72308f">
						<path d="M47 17 A24 24 0 0 0 2 27 C2 39 14 51 25 63 L32 55 M37 25 A12 12 0 1 0 31 37" opacity=".75"/>
						<path d="M61 85 C50 73 35.500 60 35.500 46 a25.500 25.500 0 0 1 51 0 C86.500 60 72 73 61 85z"/>
						<circle cx="61" cy="45" r="13"/>
					</svg>
					<div><div class="label">VZDÁLENOST</div><div class="value">3.00 <span class="unit">km</span></div></div>
				</div>
				<div class="stat">
					<svg class="stat-icon" viewBox="0 0 90 90" stroke="#455da8">
						<path d="M50 14 V11 H54 V4 H37 V11 H41 V14 A36 36 0 1 0 74 28 L79 23 L71 16 L66 21 A36 36 0 0 0 50 14"/>
						<path d="M45.500 50 V41"/>
						<circle cx="45.500" cy="50" r="3.500" fill="#455da8"/>
					</svg>
					<div><div class="label">TRVÁNÍ</div><div class="value">24:43</div></div>
				</div>
				<div class="stat">
					<svg class="stat-icon" viewBox="0 0 90 90" stroke="#419c5c">
						<path d="M11 69 C8 63 6.500 57 6.500 50 A38.500 38.500 0 0 1 83.500 50 C83.500 57 81 63 78 69 L70 58 Q72 54 72 50 A27 27 0 0 0 18 50 Q18 54 20 58z"/>
						<path class="dots" d="M25 50h0M31 36h0M45 30h0M59 36h0M65 50h0"/>
						<path class="hand" d="M45 51 V40"/><circle cx="45" cy="51" r="3" fill="#419c5c"/>
					</svg>
					<div><div class="label">PRŮM. TEMPO</div><div class="value">8:14 <span class="unit">min/km</span></div></div>
				</div>
				<div class="stat">
					<svg class="stat-icon" viewBox="0 0 90 90" stroke="#419c5c">
						<path d="M11 69 C8 63 6.500 57 6.500 50 A38.500 38.500 0 0 1 83.500 50 C83.500 57 81 63 78 69 L70 58 Q72 54 72 50 A27 27 0 0 0 18 50 Q18 54 20 58z"/>
						<path class="dots" d="M25 50h0M31 36h0M45 30h0M59 36h0M65 50h0"/>
						<path class="hand" d="M45 51 L54 59"/><circle cx="45" cy="51" r="3" fill="#419c5c"/>
					</svg>
					<div><div class="label">MAX. TEMPO</div><div class="value">2:08 <span class="unit">min/km</span></div></div>
				</div>
				<div class="stat">
					<svg class="stat-icon" viewBox="0 0 90 90" stroke="#c44537">
						<path d="M11 69 C8 63 6.500 57 6.500 50 A38.500 38.500 0 0 1 83.500 50 C83.500 57 81 63 78 69 L70 58 Q72 54 72 50 A27 27 0 0 0 18 50 Q18 54 20 58z"/>
						<path class="dots" d="M25 50h0M31 36h0M45 30h0M59 36h0M65 50h0"/>
						<path class="hand" d="M45 51 V40"/><circle cx="45" cy="51" r="3" fill="#c44537"/>
					</svg>
					<div><div class="label">PRŮM. RYCHLOST</div><div class="value">7.3 <span class="unit">km/h</span></div></div>
				</div>
				<div class="stat">
					<svg class="stat-icon" viewBox="0 0 90 90" stroke="#c44537">
						<path d="M11 69 C8 63 6.500 57 6.500 50 A38.500 38.500 0 0 1 83.500 50 C83.500 57 81 63 78 69 L70 58 Q72 54 72 50 A27 27 0 0 0 18 50 Q18 54 20 58z"/>
						<path class="dots" d="M25 50h0M31 36h0M45 30h0M59 36h0M65 50h0"/>
						<path class="hand" d="M45 51 L54 59"/><circle cx="45" cy="51" r="3" fill="#c44537"/>
					</svg>
					<div><div class="label">MAX. RYCHLOST</div><div class="value">28.1 <span class="unit">km/h</span></div></div>
				</div>
				<div class="stat">
					<svg class="stat-icon" viewBox="0 0 90 90" stroke="#ea9d3c">
						<path d="M46 2 C55 9 60 13 66 25 C68 30 69 35 71 34 Q74 33 73 28 C78 35 79.500 42 79.500 49 A34 34 0 0 1 11.500 49 C11.500 39 14 31 18 26 C16 34 17 40 20 40 C24 40 21 24 34 11 C28 24 31 32 40 32 C52 32 56 16 46 2z"/>
						<path d="M46 46 C37 49 33 56 33 62 A13 13 0 0 0 60 62 C60 56 58 51 51 49 Q55 56 50 57 Q43 56 46 46z"/>
					</svg>
					<div><div class="label">KALORIE</div><div class="value">210 <span class="unit">kcal</span></div></div>
				</div>
				<div class="stat">
					<svg class="stat-icon" viewBox="0 0 90 90" stroke="#4a7fee">
						<path d="M46 29 Q38 15 27 4 Q3 26 3 42 Q5 64 32 65" opacity=".7"/>
						<path d="M62.500 20 Q88 46 88 60 A25 25 0 0 1 37 60 Q37 46 62.500 20z"/>
					</svg>
					<div><div class="label">HYDRATACE</div><div class="value">0.10 <span class="unit">litry</span></div></div>
				</div>
				<div class="stat">
					<svg class="stat-icon" viewBox="0 0 90 90" stroke="#7386bf">
						<path d="M5 68.500 L27 21 L37 40 M36 68.500 L59 21 L85 68.500"/>
					</svg>
					<div><div class="label">MIN. NAD. VÝŠKA</div><div class="value">241 <span class="unit">m</span></div></div>
				</div>
				<div class="stat">
					<svg class="stat-icon" viewBox="0 0 90 90" stroke="#414493">
						<path d="M5.500 68.500 L27.500 21 L37 40 M27.500 86 L59.500 7 L86 66"/>
					</svg>
					<div><div class="label">MAX. NAD. VÝŠKA</div><div class="value">268 <span class="unit">m</span></div></div>
				</div>
				<div class="stat">
					<svg class="stat-icon" viewBox="0 0 90 90" stroke="#4394c0"><circle cx="45" cy="45" r="39"/></svg>
					<div><div class="label">CELK. STOUPÁNÍ</div></div>
				</div>
				<div class="stat">
					<svg class="stat-icon" viewBox="0 0 90 90" stroke="#a0d8e5"><circle cx="45" cy="45" r="39"/></svg>
					<div><div class="label">CELK. KLESÁNÍ</div></div>
				</div>
			</section>
		</main>
		<div class="home-indicator"></div>
	</div>
</body>
</html>
```

FILE: styles.css
```css
* {
	box-sizing: border-box;
}

body {
	margin: 0;
	background-color: #eff1f3;
	color: #222629;
	font-family: Inter, "Liberation Sans", sans-serif;
}

button {
	border: none;
	padding: 0;
	cursor: pointer;
}

.screen {
	height: 100vh;
	overflow: hidden;
}

/* header */
.header {
	background: linear-gradient(#7bca3f, #439942);
	border-bottom: 1px solid #a5a5a8;
	color: #fff;
}

.status-bar {
	display: flex;
	justify-content: space-between;
	align-items: center;
	height: 138px;
	padding: 0 42px 0 60px;
}

.status-left {
	display: flex;
	align-items: center;
	gap: 10px;
}

.time {
	font-size: 46px;
	font-weight: 500;
}

.location {
	width: 30px;
	height: 30px;
}

.status-right {
	display: flex;
	gap: 14px;
}

.nav {
	display: grid;
	grid-template-columns: 1fr auto 1fr;
	align-items: center;
	height: 126px;
	padding: 0 27px 8px;
}

.nav-btn {
	display: flex;
	justify-self: start;
	background: none;
}

.nav-more {
	justify-self: end;
	margin-right: 21px;
}

h1 {
	margin: 0;
	padding-bottom: 4px;
	font-size: 58px;
	font-weight: 500;
	line-height: 64px;
}

/* banner */
.banner {
	position: relative;
	display: flex;
	align-items: center;
	max-width: 960px;
	height: 150px;
	margin: 29px auto 30px;
	padding: 0 29px 0 32px;
	background: linear-gradient(#4b5793, #574294);
	color: #fff;
}

.banner-bg {
	position: absolute;
	inset: 0;
	width: 100%;
	height: 100%;
}

.banner-logo {
	position: relative;
	width: 90px;
	height: 100px;
}

.banner-text {
	position: relative;
	flex: 1;
	padding-left: 30px;
	font: 700 41px Roboto, sans-serif;
}

.premium-btn {
	position: relative;
	width: 277px;
	height: 90px;
	border-radius: 6px;
	background-color: #82c03b;
	color: #fff;
	font: 500 36px Roboto, sans-serif;
}

.card {
	margin: 0 30px;
	background-color: #fff;
	box-shadow: 0 2px 6px rgba(0, 0, 0, .12);
}

/* map */
.map {
	position: relative;
	height: 790px;
	overflow: hidden;
}

.map-svg {
	display: block;
	width: 100%;
	height: 100%;
}

.map-svg path, .map-svg circle {
	vector-effect: non-scaling-stroke;
	stroke-linejoin: round;
}

.field { fill: #fdfce7; }
.town { fill: #f5f4e0; }
.campus { fill: #fdf2d0; }
.hospital { fill: #dfc7c4; }
.wood { fill: #c8d7b1; }
.park, .parkhole { fill: #ddefc6; }
.young { fill: #e6efc4; }
.pitch { fill: #c1e3bb; }
.lot { fill: #ececec; }
.white { fill: #f9f9f6; }

.bld {
	fill: #e2e0df;
	stroke: #d8d4d2;
	stroke-width: 1;
}

.path, .parkpath, .service, .stream, .minor, .street, .secondary, .secondary-edge, .trunk, .trunk-edge, .lane, .rail, .track {
	fill: none;
}

.path {
	stroke: #dfddcb;
	stroke-width: 2;
	stroke-dasharray: 2 1;
}

.parkpath {
	stroke: #f3f1e6;
	stroke-width: 2;
	stroke-dasharray: 2 1;
}

.service {
	stroke: #fbfaf0;
	stroke-width: 2;
	filter: drop-shadow(0 0 2px rgba(140, 135, 100, .5));
}

.stream {
	stroke: #c3dbe3;
	stroke-width: 1;
}

.minor {
	stroke: #f8f7ee;
	stroke-width: 3;
	filter: drop-shadow(0 0 2px rgba(140, 135, 100, .4));
}

.street {
	stroke: #fff;
	stroke-width: 5;
	stroke-linecap: round;
	filter: drop-shadow(0 0 3px rgba(140, 135, 100, .4));
}

.street.wide {
	stroke-width: 6;
}

.rail {
	stroke: #c9c6bd;
	stroke-width: 2;
	stroke-dasharray: 1 2;
}

.secondary {
	stroke: #faeda8;
	stroke-width: 9;
}

.secondary-edge {
	stroke: #e6d675;
	stroke-width: 12;
}

.trunk {
	stroke: #f7d794;
	stroke-width: 18;
}

.trunk-edge {
	stroke: #dfae60;
	stroke-width: 20;
}

.trunk.thin {
	stroke-width: 9;
}

.trunk-edge.thin {
	stroke-width: 11;
}

.lane {
	stroke: #a99468;
	stroke-width: 1;
	stroke-dasharray: 3 1;
}

.track {
	stroke: #659ef5;
	stroke-width: 6;
	stroke-linecap: round;
}

.labels text {
	fill: #68686c;
	stroke: rgba(255, 255, 255, .7);
	stroke-width: 2;
	paint-order: stroke;
	font: 9px "Noto Sans", sans-serif;
}

.labels .big {
	font-size: 11px;
}

.labels .place text {
	fill: #7f8080;
	font-size: 14px;
	font-weight: 500;
	text-anchor: middle;
}

.labels .place .clinic {
	fill: #866c6c;
}

.labels .place .square {
	fill: #7d9170;
	font-style: italic;
}

.attribution {
	position: absolute;
	right: 0;
	bottom: 0;
	padding: 0 2px;
	background-color: rgba(255, 255, 255, .75);
	color: #414141;
	font-size: 25px;
	line-height: 29px;
}

/* activity */
.activity {
	display: flex;
	gap: 30px;
	margin-top: 30px;
	padding: 30px;
}

.activity-icon {
	width: 120px;
	height: 120px;
}

.activity-text {
	display: flex;
	flex-direction: column;
	font-size: 40px;
	line-height: 52px;
}

h2 {
	margin: 0;
	padding: 50px 60px 34px;
	font-size: 40px;
	font-weight: 600;
	line-height: 52px;
}

/* stats */
.stats {
	display: grid;
	grid-template-columns: 1fr 1fr;
	grid-auto-rows: 150px;
	padding: 60px 0 0 30px;
}

.stat {
	display: flex;
	gap: 30px;
}

.stat-icon {
	width: 90px;
	height: 90px;
	fill: none;
	stroke-width: 4;
	stroke-linecap: round;
}

.stat-icon .dots {
	stroke-width: 5;
}

.stat-icon .hand {
	stroke-width: 5;
	stroke-linecap: butt;
}

.label {
	color: #9297a1;
	font-size: 32px;
	font-weight: 500;
	line-height: 30px;
}

.value {
	color: #000;
	font: 600 58px/90px Roboto, sans-serif;
}

.unit {
	margin-left: 2px;
	font: 400 40px Inter, sans-serif;
}

.home-indicator {
	position: fixed;
	bottom: 24px;
	left: 50%;
	width: 402px;
	height: 15px;
	margin-left: -201px;
	border-radius: 8px;
	background-color: #000;
}
```
